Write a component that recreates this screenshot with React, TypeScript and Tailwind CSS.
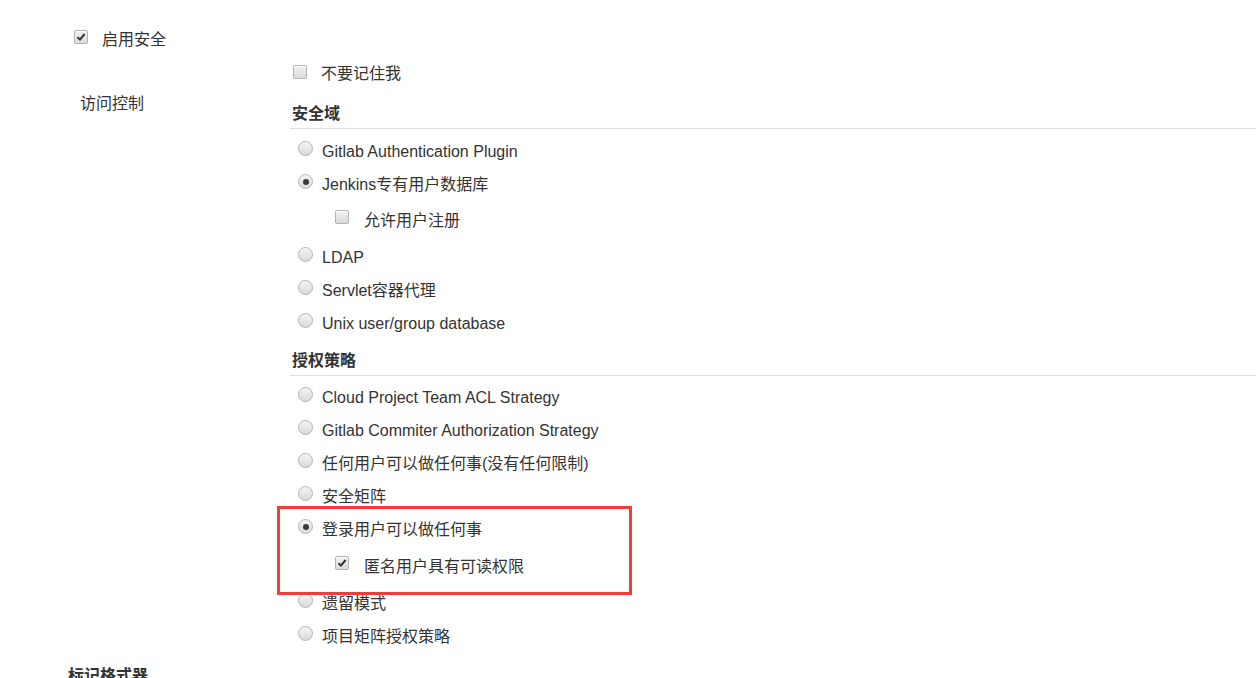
import React from 'react';

const font = "font-['Liberation_Sans','Noto_Sans_CJK_SC',sans-serif]";

function Check({ checked }: { checked?: boolean }) {
  return (
    <span className="relative inline-flex h-[14px] w-[14px] shrink-0 items-center justify-center rounded-[2px] border border-[#b3b3b3] bg-gradient-to-b from-[#f2f2f2] to-[#dcdcdc] shadow-[inset_0_1px_0_#fff]">
      {checked && (
        <svg viewBox="0 0 10 10" className="h-[10px] w-[10px]">
          <path d="M1.5 5.2 L4 7.6 L8.6 2" fill="none" stroke="#333" strokeWidth="2" />
        </svg>
      )}
    </span>
  );
}

function Radio({ checked }: { checked?: boolean }) {
  return (
    <span className="inline-flex h-[15px] w-[15px] shrink-0 items-center justify-center rounded-full border border-[#b3b3b3] bg-gradient-to-b from-[#f4f4f4] to-[#dadada]">
      {checked && <span className="h-[6px] w-[6px] rounded-full bg-[#3a3a3a]" />}
    </span>
  );
}

function RadioRow({ label, checked }: { label: string; checked?: boolean }) {
  return (
    <div className="flex h-[33px] items-center pl-[8px]">
      <span className="-mt-[6px] flex"><Radio checked={checked} /></span>
      <span className="ml-[9px]">{label}</span>
    </div>
  );
}

function SubCheck({ label, checked, h }: { label: string; checked?: boolean; h: string }) {
  return (
    <div className={`flex items-center pl-[45px] ${h}`}>
      <span className="-mt-[8px] flex"><Check checked={checked} /></span>
      <span className="ml-[15px]">{label}</span>
    </div>
  );
}

function Header({ label, h }: { label: string; h: string }) {
  return (
    <div className={`flex items-end border-b border-[#dddddd] pb-[4px] pl-[2px] font-bold ${h}`}>
      <span className="leading-[20px]">{label}</span>
    </div>
  );
}

export default function App() {
  return (
    <div className={`h-[678px] w-[1256px] overflow-hidden bg-white text-[16px] leading-[20px] text-[#333] ${font}`}>
      <div className="h-[23px]" />
      <div className="flex h-[34px] items-center pl-[74px]">
        <span className="-mt-[6px] flex"><Check checked /></span>
        <span className="ml-[14px]">启用安全</span>
      </div>
      <div className="flex">
        <div className="w-[290px] shrink-0 pl-[80px] pt-[37px]">访问控制</div>
        <div className="flex-1">
          <div className="flex h-[34px] items-center pl-[3px]">
            <span className="-mt-[5px] flex"><Check /></span>
            <span className="ml-[14px]">不要记住我</span>
          </div>
          <Header label="安全域" h="h-[38px]" />
          <div className="pt-[6px]">
            <RadioRow label="Gitlab Authentication Plugin" />
            <RadioRow label="Jenkins专有用户数据库" checked />
            <SubCheck label="允许用户注册" h="h-[40px]" />
            <RadioRow label="LDAP" />
            <RadioRow label="Servlet容器代理" />
            <RadioRow label="Unix user/group database" />
          </div>
          <Header label="授权策略" h="h-[36px]" />
          <div className="pt-[5px]">
            <RadioRow label="Cloud Project Team ACL Strategy" />
            <RadioRow label="Gitlab Commiter Authorization Strategy" />
            <RadioRow label="任何用户可以做任何事(没有任何限制)" />
            <RadioRow label="安全矩阵" />
            <div className="relative">
              <RadioRow label="登录用户可以做任何事" checked />
              <SubCheck label="匿名用户具有可读权限" checked h="h-[41px]" />
              <div className="pointer-events-none absolute left-[-13px] top-[-7px] h-[89px] w-[355px] border-[3px] border-[#f23b3b]" />
            </div>
            <RadioRow label="遗留模式" />
            <RadioRow label="项目矩阵授权策略" />
          </div>
        </div>
      </div>
      <div className="pl-[68px] pt-[13px] font-bold">标记格式器</div>
    </div>
  );
}
